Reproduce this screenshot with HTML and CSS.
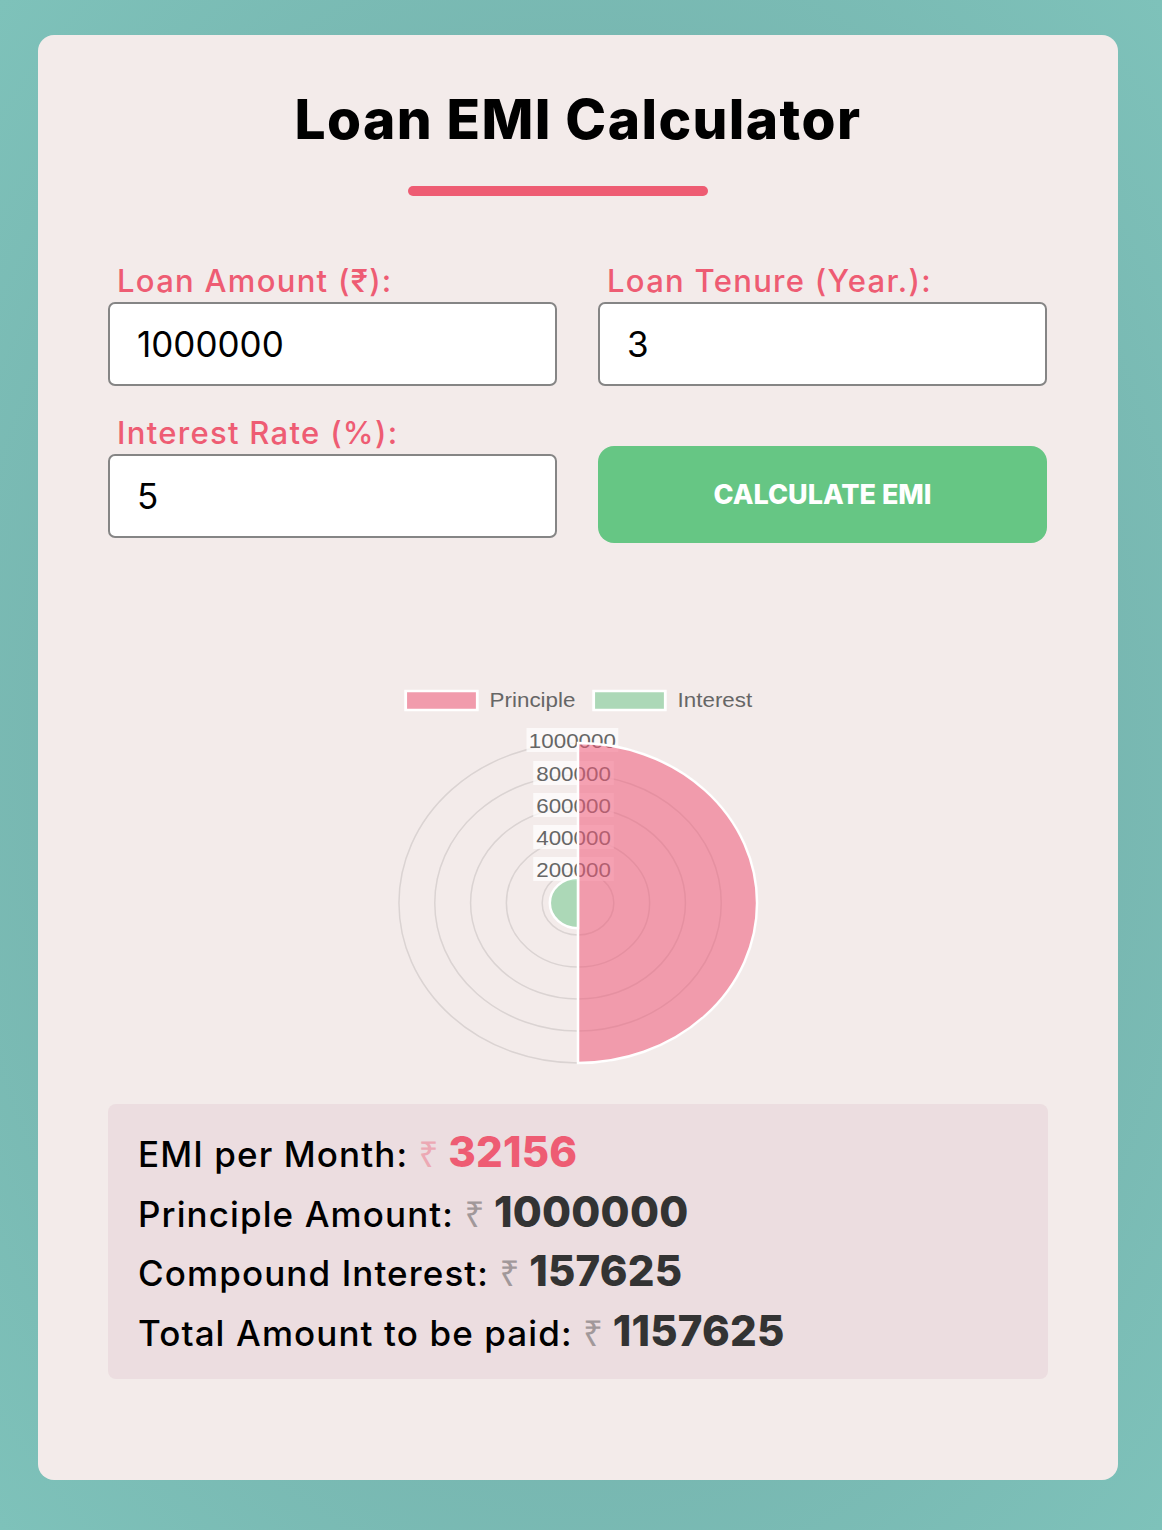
FILE: index.html
```html
<!DOCTYPE html>
<html lang="en">
<head>
<meta charset="utf-8">
<title>Loan EMI Calculator</title>
<link rel="stylesheet" href="styles.css">
</head>
<body>
<main class="card">
  <h1 class="title">Loan EMI Calculator</h1>
  <div class="underline"></div>

  <form class="form">
    <div class="field">
      <label class="label">Loan Amount (₹):</label>
      <input class="input" type="text" value="1000000">
    </div>
    <div class="field">
      <label class="label">Loan Tenure (Year.):</label>
      <input class="input" type="text" value="3">
    </div>
    <div class="field">
      <label class="label">Interest Rate (%):</label>
      <input class="input" type="text" value="5">
    </div>
    <div class="field field-btn">
      <button class="btn" type="button">CALCULATE EMI</button>
    </div>
  </form>

  <svg class="chart" width="940" height="400" viewBox="0 0 840 400" preserveAspectRatio="none">
    <g class="legend">
      <rect x="266" y="11" width="64" height="19" fill="rgba(238,90,120,0.55)" stroke="#fff" stroke-width="2.5"/>
      <text x="341" y="27">Principle</text>
      <rect x="434" y="11" width="64" height="19" fill="rgba(102,198,132,0.5)" stroke="#fff" stroke-width="2.5"/>
      <text x="509" y="27">Interest</text>
    </g>
    <g class="rings" fill="none" stroke="rgba(0,0,0,0.1)" stroke-width="1.5">
      <circle cx="420" cy="223" r="32" vector-effect="non-scaling-stroke"/>
      <circle cx="420" cy="223" r="64" vector-effect="non-scaling-stroke"/>
      <circle cx="420" cy="223" r="96" vector-effect="non-scaling-stroke"/>
      <circle cx="420" cy="223" r="128" vector-effect="non-scaling-stroke"/>
      <circle cx="420" cy="223" r="160" vector-effect="non-scaling-stroke"/>
    </g>
    <g class="ticks">
      <rect x="380" y="177" width="72" height="24" fill="rgba(255,255,255,0.7)"/>
      <text x="416" y="190">200000</text>
      <rect x="380" y="145" width="72" height="24" fill="rgba(255,255,255,0.7)"/>
      <text x="416" y="158">400000</text>
      <rect x="380" y="113" width="72" height="24" fill="rgba(255,255,255,0.7)"/>
      <text x="416" y="126">600000</text>
      <rect x="380" y="81" width="72" height="24" fill="rgba(255,255,255,0.7)"/>
      <text x="416" y="94">800000</text>
      <rect x="374" y="48" width="82" height="24" fill="rgba(255,255,255,0.7)"/>
      <text x="415" y="61">1000000</text>
    </g>
    <path d="M420,63 A160,160 0 0 1 420,383 Z" fill="rgba(238,90,120,0.55)" stroke="#fff" stroke-width="2.5" vector-effect="non-scaling-stroke"/>
    <path d="M420,248.2 A25.2,25.2 0 0 1 420,197.8 Z" fill="rgba(102,198,132,0.5)" stroke="#fff" stroke-width="2.5" vector-effect="non-scaling-stroke"/>
  </svg>

  <section class="results">
    <p class="row">EMI per Month: <span class="val val-pink"><span class="cur">₹</span> 32156</span></p>
    <p class="row">Principle Amount: <span class="val"><span class="cur">₹</span> 1000000</span></p>
    <p class="row">Compound Interest: <span class="val"><span class="cur">₹</span> 157625</span></p>
    <p class="row">Total Amount to be paid: <span class="val"><span class="cur">₹</span> 1157625</span></p>
  </section>
</main>
</body>
</html>
```
FILE: styles.css
```css
html, body {
  margin: 0;
  padding: 0;
}
body {
  min-height: 1530px;
  background: radial-gradient(ellipse at 50% 50%, #6ea7a2 0%, #77b6b0 60%, #7ec2ba 100%);
  font-family: "Inter", "Noto Sans", "DejaVu Sans", sans-serif;
  padding-top: 35px;
  padding-left: 38px;
  box-sizing: border-box;
}
.card {
  width: 1080px;
  height: 1445px;
  box-sizing: border-box;
  background: #f3ebea;
  border-radius: 16px;
  padding: 0 70px;
  display: flex;
  flex-direction: column;
}
.title {
  margin: 52px 0 0;
  text-align: center;
  font-size: 55px;
  line-height: 64px;
  font-weight: 800;
  color: #000;
  letter-spacing: 1.4px;
}
.underline {
  width: 300px;
  height: 10px;
  border-radius: 5px;
  background: #ee5c73;
  margin: 35px 0 0 300px;
}
.form {
  margin-top: 64px;
  display: grid;
  grid-template-columns: 449px 449px;
  column-gap: 41px;
  row-gap: 26px;
}
.field {
  display: flex;
  flex-direction: column;
}
.label {
  color: #ee5c73;
  font-size: 31px;
  line-height: 42px;
  font-weight: 500;
  padding-left: 9px;
  letter-spacing: 1.3px;
}
.input {
  height: 84px;
  box-sizing: border-box;
  border: 2px solid #858585;
  border-radius: 7px;
  background: #fff;
  padding: 0 27px;
  font-family: "Inter", "Noto Sans", sans-serif;
  font-size: 35px;
  color: #000;
  outline: none;
}
.field-btn {
  justify-content: flex-start;
}
.btn {
  margin-top: 34px;
  height: 97px;
  border: none;
  border-radius: 16px;
  background: #66c684;
  color: #fff;
  font-family: "Inter", "Noto Sans", sans-serif;
  font-weight: 800;
  font-size: 27px;
  letter-spacing: 0px;
}
.chart {
  display: block;
  margin-top: 137px;
}
.legend text {
  font-family: "Liberation Sans", Arial, sans-serif;
  font-size: 20px;
  fill: #666;
}
.ticks text {
  font-family: "Liberation Sans", Arial, sans-serif;
  font-size: 20px;
  fill: #666;
  text-anchor: middle;
  dominant-baseline: central;
}
.results {
  margin-top: 24px;
  background: #ecdde0;
  border-radius: 8px;
  padding: 18px 30px 19px;
}
.row {
  margin: 0;
  height: 59.5px;
  line-height: 59.5px;
  font-size: 35px;
  font-weight: 500;
  color: #000;
  white-space: nowrap;
  letter-spacing: 1.1px;
}
.val {
  font-weight: 800;
  font-size: 42px;
  color: #333;
  letter-spacing: 0.2px;
}
.val-pink {
  color: #ee5c73;
}
.cur {
  font-weight: 400;
  font-size: 35px;
  opacity: 0.4;
  font-family: "Noto Sans", "DejaVu Sans", sans-serif;
}
```
